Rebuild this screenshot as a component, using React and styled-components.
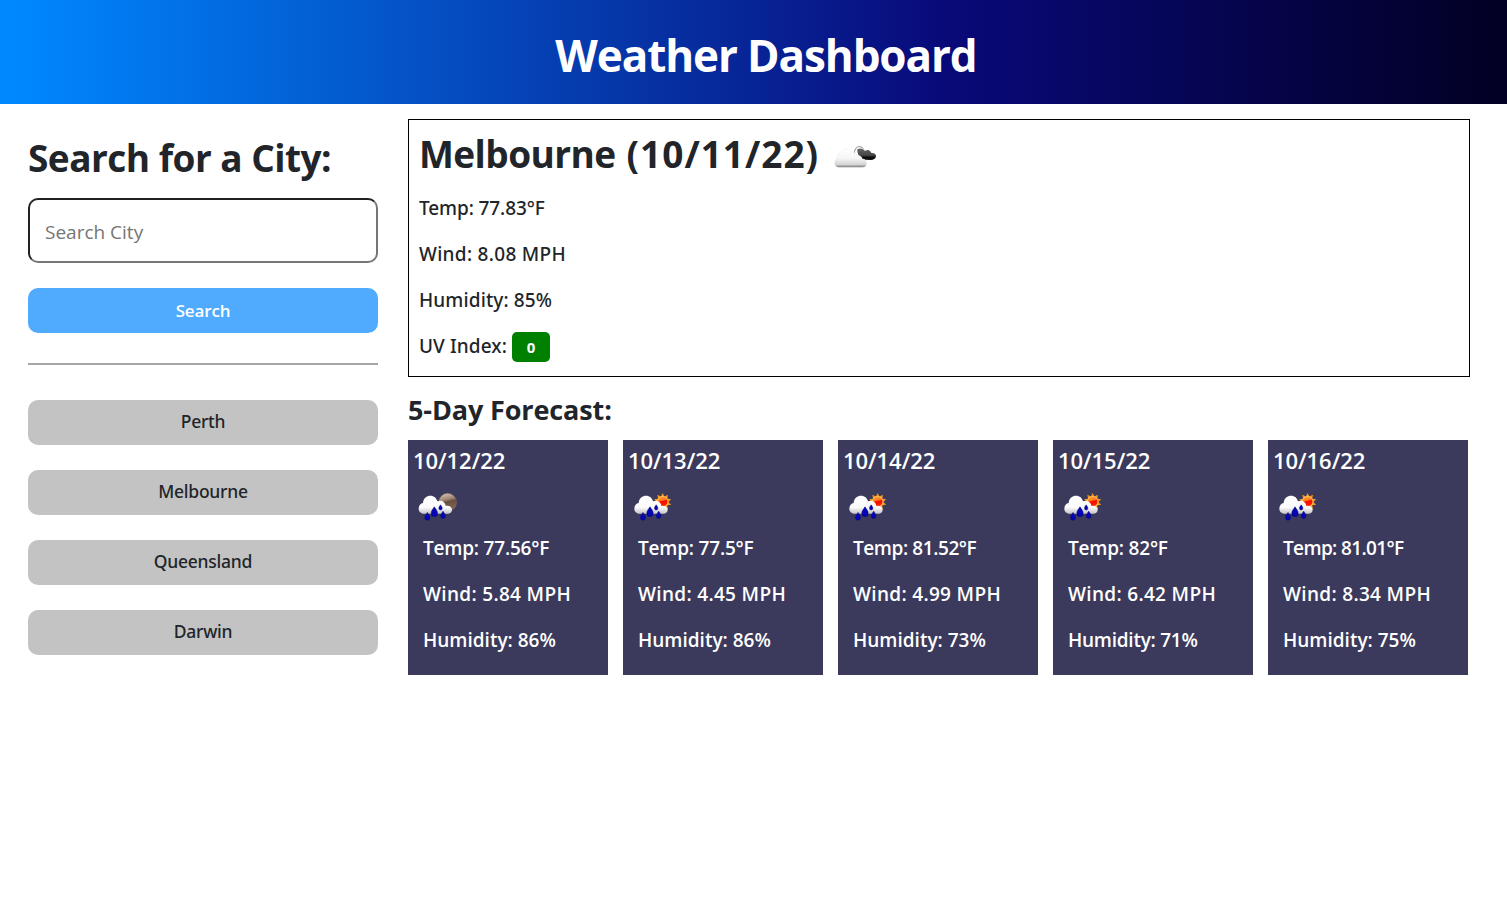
import React from "react";
import styled, { createGlobalStyle } from "styled-components";

const Global = createGlobalStyle`
  *, *::before, *::after { box-sizing: border-box; }
  body {
    margin: 0;
    background: #fff;
    color: #212529;
    font-family: "Segoe UI", "Open Sans", "Noto Sans", sans-serif;
  }
  h1, h2, h3, h4, p { margin: 0; }
  button, input { font-family: inherit; }
`;

const Header = styled.header`
  display: flex;
  align-items: center;
  justify-content: center;
  height: 104px;
  padding: 6px 0 0 25px;
  background: linear-gradient(90deg, #0088ff 1%, #090979 63%, #020024 100%);
`;

const Title = styled.h1`
  color: #fff;
  font-size: 44px;
  font-weight: 700;
  letter-spacing: -1.1px;
  line-height: 50px;
`;

const Page = styled.div`
  display: flex;
  gap: 30px;
  padding-left: 28px;
`;

const Sidebar = styled.aside`
  width: 350px;
  padding-top: 34px;
`;

const SearchHeading = styled.h2`
  font-size: 37px;
  font-weight: 700;
  letter-spacing: -0.52px;
  line-height: 40px;
  white-space: nowrap;
`;

const SearchForm = styled.form`
  display: flex;
  flex-direction: column;
  gap: 25px;
  margin-top: 20px;
`;

const SearchInput = styled.input`
  height: 65px;
  padding: 2px 15px 0;
  border: 2px inset #767676;
  border-radius: 10px;
  background: #fff;
  color: #212529;
  font-size: 19px;
  letter-spacing: 0;
  outline: none;
  &::placeholder { color: #757575; opacity: 1; }
`;

const SearchButton = styled.button`
  height: 45px;
  padding: 0;
  border: 0;
  border-radius: 10px;
  background: #50abff;
  color: #fff;
  font-size: 17px;
  font-weight: 600;
  letter-spacing: -0.15px;
`;

const Divider = styled.div`
  height: 2px;
  margin: 30px 0 35px;
  background: #a6a6a6;
`;

const CityList = styled.div`
  display: flex;
  flex-direction: column;
  gap: 25px;
`;

const CityButton = styled.button`
  height: 45px;
  padding: 0 0 3px;
  border: 0;
  border-radius: 10px;
  background: #c3c3c3;
  color: #212529;
  font-family: "Segoe UI", "Noto Sans", sans-serif;
  font-size: 17.5px;
  font-weight: 500;
  letter-spacing: -0.25px;
`;

const Main = styled.main`
  width: 1062px;
  padding-top: 15px;
`;

const Current = styled.section`
  height: 258px;
  padding: 10px 10px 0;
  border: 1px solid #000;
`;

const CurrentTop = styled.div`
  display: flex;
  height: 47px;
  margin-bottom: 8px;
`;

const CurrentTitle = styled.h2`
  width: 401px;
  font-size: 37px;
  font-weight: 700;
  letter-spacing: -0.57px;
  line-height: 48px;
  white-space: nowrap;
`;

const CurrentDate = styled.span`
  margin-left: 2px;
  letter-spacing: 1px;
`;

const Reading = styled.p`
  display: flex;
  align-items: center;
  height: 46px;
  font-family: "Segoe UI", ${(p) => (p.$strong ? `"Open Sans"` : `"Noto Sans"`)}, sans-serif;
  font-size: 19px;
  font-weight: ${(p) => (p.$strong ? 600 : 500)};
  letter-spacing: ${(p) => p.$track || 0}px;
  white-space: nowrap;
`;

const UvBadge = styled.span`
  width: 38px;
  height: 30px;
  margin: 2px 0 0 5px;
  border-radius: 5px;
  background: #008000;
  color: #fff;
  font-size: 15px;
  font-weight: 700;
  line-height: 30px;
  text-align: center;
`;

const ForecastHeading = styled.h3`
  margin: 13px 0 10px;
  font-size: 27px;
  font-weight: 700;
  letter-spacing: -0.12px;
  line-height: 40px;
`;

const Forecast = styled.div`
  display: flex;
  gap: 15px;
`;

const DayCard = styled.article`
  width: 200px;
  height: 235px;
  padding-top: 5px;
  background: #3b3a5c;
  color: #fff;
`;

const DayDate = styled.h4`
  padding-left: 5px;
  margin-bottom: 5px;
  font-size: 22px;
  font-weight: 600;
  letter-spacing: -0.05px;
  line-height: 30px;
`;

const DayReadings = styled.div`
  padding-left: 15px;
`;

const Icon = styled.svg`
  display: block;
  flex: none;
`;

const Cloudy = () => (
  <Icon width="70" height="50" viewBox="0 0 210 150">
    <defs>
      <linearGradient id="lightCloud" x1="0" y1="0" x2="0" y2="1">
        <stop offset="0" stopColor="#fff" />
        <stop offset="0.5" stopColor="#f6f6f6" />
        <stop offset="0.85" stopColor="#d4d4d4" />
        <stop offset="1" stopColor="#707070" />
      </linearGradient>
      <linearGradient id="darkCloud" x1="0" y1="0" x2="0" y2="1">
        <stop offset="0" stopColor="#666" />
        <stop offset="0.6" stopColor="#444" />
        <stop offset="0.75" stopColor="#0a0a0a" />
        <stop offset="1" stopColor="#111" />
      </linearGradient>
    </defs>
    <path d="M103 69 C104 55 112 49 119 50 C125 50 129 54 131 58" fill="none" stroke="#8a8a8a" strokeWidth="3" />
    <path d="M112 58 C119 53 130 55 135 63 C142 56 153 61 154 69 C163 68 169 73 168 79 C167 87 160 90 153 90 L130 89 C120 84 111 73 112 58Z" fill="url(#darkCloud)" />
    <path d="M56 112 C47 111 43 104 44 97 C44 91 48 87 53 85 C50 75 57 69 64 68 C68 55 86 53 93 66 C101 64 108 70 110 78 C117 74 126 79 127 87 C136 87 140 92 140 99 C140 107 135 112 128 112Z" fill="url(#lightCloud)" stroke="#e2e2e2" strokeWidth="1" />
  </Icon>
);

const drop = (x, y, r) =>
  `M${x} ${y - r * 1.7} C${x + r * 0.5} ${y - r * 0.8} ${x + r} ${y - r * 0.5} ${x + r} ${y + r * 0.4} A${r} ${r} 0 0 1 ${x - r} ${y + r * 0.4} C${x - r} ${y - r * 0.5} ${x - r * 0.5} ${y - r * 0.8} ${x} ${y - r * 1.7}Z`;

const RainIcon = ({ night, id }) => {
  const dx = night ? 0 : 2;
  const rays = Array.from({ length: 20 }, (_, i) => {
    const a = (i * Math.PI) / 10 - Math.PI / 2;
    const r = i % 2 ? 17 : 27;
    return `${119 + r * Math.cos(a)},${66 + r * Math.sin(a)}`;
  }).join(" ");
  return (
    <Icon width="70" height="45" viewBox="0 0 210 135">
      <defs>
        <linearGradient id={`cloud${id}`} x1="0" y1="0" x2="0" y2="1">
          <stop offset="0" stopColor="#fff" />
          <stop offset="0.65" stopColor="#fbfbfb" />
          <stop offset="1" stopColor="#c4c4c8" />
        </linearGradient>
        <linearGradient id={`orb${id}`} x1="0.25" y1="0" x2="0.5" y2="1">
          <stop offset="0" stopColor={night ? "#d8c8bc" : "#ffa040"} />
          <stop offset="0.38" stopColor={night ? "#9c816d" : "#ff7818"} />
          <stop offset="0.5" stopColor={night ? "#684f40" : "#f80c00"} />
          <stop offset="1" stopColor={night ? "#876850" : "#ff2000"} />
        </linearGradient>
      </defs>
      {night ? (
        <circle cx="119" cy="67" r="27" fill={`url(#orb${id})`} stroke="#7c6556" strokeWidth="1.5" />
      ) : (
        <>
          <polygon points={rays} fill="#f59a18" />
          <circle cx="119" cy="65" r="17" fill="#ffc568" />
          <circle cx="119" cy="65" r="14.5" fill={`url(#orb${id})`} />
        </>
      )}
      <g transform={`translate(${dx} 0)`}>
        <path d="M48 101 C38 101 32 94 32 86 C32 76 38 70 45 69 C46 54 57 47 67 47 C78 47 86 54 88 64 C99 59 112 65 113 78 C124 75 132 82 132 89 C132 97 126 101 119 101Z" fill={`url(#cloud${id})`} />
        <g fill="#0606b8" stroke="#02026a" strokeWidth="1.5">
          <path d={drop(58, 110, 7.5)} />
          <path d={drop(79, 96.5, 9.5)} />
          <path d={drop(97.5, 83, 5)} />
          <path d={drop(105, 105.5, 7)} />
        </g>
      </g>
    </Icon>
  );
};

const cities = ["Perth", "Melbourne", "Queensland", "Darwin"];

const days = [
  { date: "10/12/22", temp: "77.56", wind: "5.84", humidity: "86", night: true },
  { date: "10/13/22", temp: "77.5", wind: "4.45", humidity: "86" },
  { date: "10/14/22", temp: "81.52", wind: "4.99", humidity: "73" },
  { date: "10/15/22", temp: "82", wind: "6.42", humidity: "71" },
  { date: "10/16/22", temp: "81.01", wind: "8.34", humidity: "75" },
];

const tighten = (value, base, step) => base - (value.split("1").length - 1) * step;

export default function App() {
  return (
    <>
      <Global />
      <Header>
        <Title>Weather Dashboard</Title>
      </Header>
      <Page>
        <Sidebar>
          <SearchHeading>Search for a City:</SearchHeading>
          <SearchForm>
            <SearchInput placeholder="Search City" />
            <SearchButton type="button">Search</SearchButton>
          </SearchForm>
          <Divider />
          <CityList>
            {cities.map((c) => (
              <CityButton key={c}>{c}</CityButton>
            ))}
          </CityList>
        </Sidebar>
        <Main>
          <Current>
            <CurrentTop>
              <CurrentTitle>
                Melbourne <CurrentDate>(10/11/22)</CurrentDate>
              </CurrentTitle>
              <Cloudy />
            </CurrentTop>
            <Reading $track={-0.1}>Temp: 77.83°F</Reading>
            <Reading $track={0.3}>Wind: 8.08 MPH</Reading>
            <Reading $track={0.12}>Humidity: 85%</Reading>
            <Reading $track={0.1}>
              UV Index: <UvBadge>0</UvBadge>
            </Reading>
          </Current>
          <ForecastHeading>5-Day Forecast:</ForecastHeading>
          <Forecast>
            {days.map((d, i) => (
              <DayCard key={d.date}>
                <DayDate>{d.date}</DayDate>
                <RainIcon id={i} night={d.night} />
                <DayReadings>
                  <Reading $strong $track={tighten(d.temp, -0.2, 0.22)}>Temp: {d.temp}°F</Reading>
                  <Reading $strong $track={0.32}>Wind: {d.wind} MPH</Reading>
                  <Reading $strong $track={tighten(d.humidity, 0, 0.25)}>Humidity: {d.humidity}%</Reading>
                </DayReadings>
              </DayCard>
            ))}
          </Forecast>
        </Main>
      </Page>
    </>
  );
}
